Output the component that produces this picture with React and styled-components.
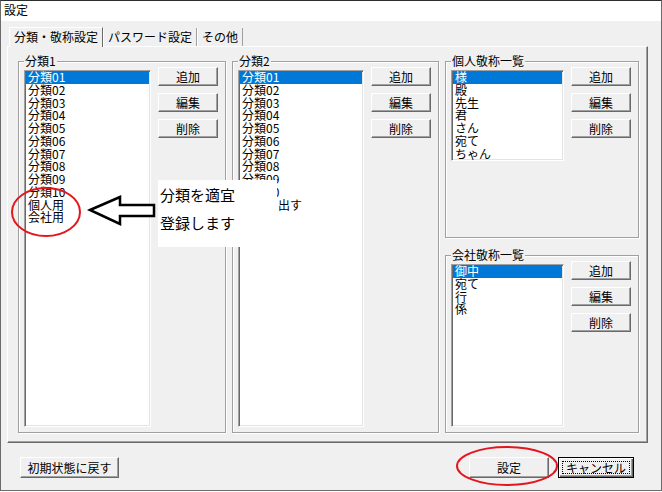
import React from 'react'
import styled, { createGlobalStyle } from 'styled-components'

const GlobalStyle = createGlobalStyle`
  html, body {
    margin: 0;
    padding: 0;
    background: #fff;
  }
  body {
    font-family: "Noto Sans CJK JP", "Noto Sans", sans-serif;
    font-size: 12px;
    color: #000;
  }
  * {
    box-sizing: border-box;
  }
`

const Window = styled.div`
  position: relative;
  width: 662px;
  height: 491px;
  border: 1px solid #6b6b6b;
  border-top-color: #2d2d2d;
  display: flex;
  flex-direction: column;
  background: #f0f0f0;
`

const TitleBar = styled.div`
  height: 20px;
  background: #fff;
  padding-left: 3px;
  line-height: 17px;
  font-size: 12px;
`

const Body = styled.div`
  flex: 1;
  display: flex;
  flex-direction: column;
  padding: 6px 13px 0 6px;
`

const TabRow = styled.div`
  display: flex;
  align-items: flex-end;
  height: 19px;
  padding-left: 2px;
  position: relative;
  z-index: 1;
`

const Tab = styled.div`
  height: ${(p) => (p.$active ? '20px' : '18px')};
  margin-bottom: ${(p) => (p.$active ? '-1px' : '0')};
  padding: 0 4px;
  line-height: 17px;
  font-size: 12px;
  background: #f0f0f0;
  border-left: 1px solid #fff;
  border-top: ${(p) => (p.$active ? '1px solid #fff' : 'none')};
  border-right: 1px solid ${(p) => (p.$active ? '#696969' : '#a0a0a0')};
  white-space: nowrap;
`

const Panel = styled.div`
  height: 397px;
  border: 1px solid;
  border-color: #fff #696969 #696969 #fff;
  box-shadow: inset -1px -1px 0 #a0a0a0;
  padding: 7px 8px 9px 10px;
  display: grid;
  grid-template-columns: 208px 207px 194px;
  column-gap: 6px;
`

const Column = styled.div`
  display: flex;
  flex-direction: column;
  gap: 10px;
  min-height: 0;
`

const Group = styled.fieldset`
  margin: 0;
  min-width: 0;
  padding: 2px 7px 5px 5px;
  border: 1px solid #a0a0a0;
  box-shadow: inset 1px 1px 0 #fff, 1px 1px 0 #fff;
  display: flex;
  gap: 7px;
  height: ${(p) => p.$height || 'auto'};
  flex: ${(p) => (p.$height ? 'none' : '1')};
`

const Legend = styled.legend`
  padding: 0 1px;
  line-height: 14px;
  font-size: 12px;
  background: #f0f0f0;
`

const ListBox = styled.div`
  flex: 1;
  min-width: 0;
  background: #fff;
  border: 1px solid;
  border-color: #a0a0a0 #fff #fff #a0a0a0;
  box-shadow: inset 1px 1px 0 #696969, inset -1px -1px 0 #e3e3e3;
  padding: 0 1px;
  overflow: hidden;
`

const Item = styled.div`
  height: 12.75px;
  line-height: 12.75px;
  padding-left: 2px;
  font-size: 12px;
  white-space: nowrap;
  background: ${(p) => (p.$selected ? '#0078d7' : 'transparent')};
  color: ${(p) => (p.$selected ? '#fff' : '#000')};
`

const ButtonCol = styled.div`
  display: flex;
  flex-direction: column;
  gap: 7px;
  margin-top: -3px;
  width: 60px;
`

const Button = styled.button`
  position: relative;
  width: ${(p) => p.$width || '60px'};
  height: ${(p) => p.$h || '19px'};
  padding: 0;
  font-family: inherit;
  font-size: 12px;
  line-height: 17px;
  color: #000;
  background: #f0f0f0;
  border: 1px solid;
  border-color: #fff #696969 #696969 #fff;
  box-shadow: inset -1px -1px 0 #a0a0a0;
  white-space: nowrap;
`

const DefaultButton = styled(Button)`
  border: 1px solid #000;
  box-shadow: inset 1px 1px 0 #fff, inset -1px -1px 0 #696969, inset -2px -2px 0 #a0a0a0;

  &::after {
    content: '';
    position: absolute;
    inset: 3px;
    border: 1px dotted #000;
  }
`

const Footer = styled.div`
  display: flex;
  align-items: center;
  height: 21px;
  margin-top: 14px;
  padding: 0 14px 0 13px;
`

const Spacer = styled.div`
  flex: 1;
`

const Callout = styled.div`
  position: absolute;
  left: 157px;
  top: 179px;
  width: 119px;
  height: 67px;
  background: #fff;
  padding: 1px 0 0 2px;
  font-size: 15px;
  line-height: 28px;
  white-space: nowrap;
`

const Mark = styled.svg`
  position: absolute;
  left: ${(p) => p.$left}px;
  top: ${(p) => p.$top}px;
  overflow: visible;
`

const list1 = ['分類01', '分類02', '分類03', '分類04', '分類05', '分類06', '分類07', '分類08', '分類09', '分類10', '個人用', '会社用']
const list2 = ['分類01', '分類02', '分類03', '分類04', '分類05', '分類06', '分類07', '分類08', '分類09', '分類10', '一覧を出す']
const personal = ['様', '殿', '先生', '君', 'さん', '宛て', 'ちゃん']
const company = ['御中', '宛て', '行', '係']

function ListGroup({ title, items, height }) {
    return (
        <Group $height={height}>
            <Legend>{title}</Legend>
            <ListBox>
                {items.map((it, i) => (
                    <Item key={i} $selected={i === 0}>{it}</Item>
                ))}
            </ListBox>
            <ButtonCol>
                <Button>追加</Button>
                <Button>編集</Button>
                <Button>削除</Button>
            </ButtonCol>
        </Group>
    )
}

export default function App() {
    return (
        <Window>
            <GlobalStyle/>
            <TitleBar>設定</TitleBar>
            <Body>
                <TabRow>
                    <Tab $active>分類・敬称設定</Tab>
                    <Tab>パスワード設定</Tab>
                    <Tab>その他</Tab>
                </TabRow>
                <Panel>
                    <ListGroup title="分類1" items={list1}/>
                    <ListGroup title="分類2" items={list2}/>
                    <Column>
                        <ListGroup title="個人敬称一覧" items={personal} height="184px"/>
                        <ListGroup title="会社敬称一覧" items={company}/>
                    </Column>
                </Panel>
                <Footer>
                    <Button $width="99px" $h="21px">初期状態に戻す</Button>
                    <Spacer/>
                    <Button $width="80px" $h="21px" style={{marginRight: 9}}>設定</Button>
                    <DefaultButton $width="76px" $h="21px">キャンセル</DefaultButton>
                </Footer>
            </Body>

            <Callout>
                <div>分類を適宜</div>
                <div>登録します</div>
            </Callout>
            <Mark $left={85} $top={191} width="72" height="36" viewBox="0 0 72 36">
                <polygon points="4,18 34,5 34,13 68,13 68,24 34,24 34,32"
                         fill="#fff" stroke="#000" strokeWidth="2.5" strokeLinejoin="miter"/>
            </Mark>
            <Mark $left={9} $top={185} width="72" height="52" viewBox="0 0 72 52">
                <ellipse cx="36" cy="26" rx="34" ry="24" fill="none" stroke="#e3161d" strokeWidth="2"/>
            </Mark>
            <Mark $left={454} $top={444} width="104" height="42" viewBox="0 0 104 42">
                <ellipse cx="52" cy="21" rx="50" ry="19" fill="none" stroke="#e3161d" strokeWidth="2"/>
            </Mark>
        </Window>
    )
}
